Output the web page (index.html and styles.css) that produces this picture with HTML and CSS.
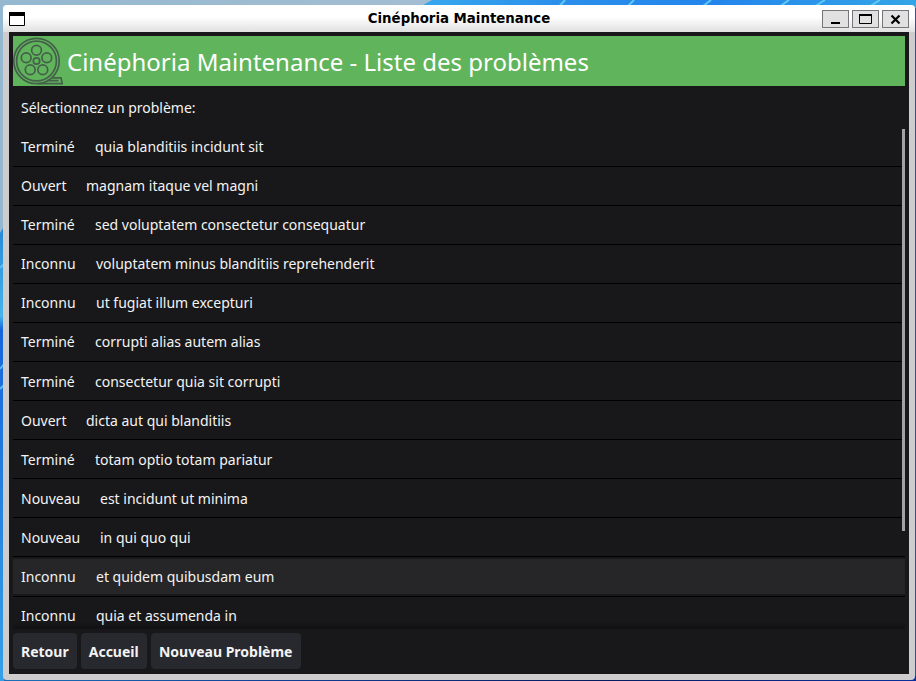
FILE: index.html
```
<!DOCTYPE html>
<html lang="fr">
<head>
<meta charset="utf-8">
<title>Cinéphoria Maintenance</title>
<link rel="stylesheet" href="styles.css">
</head>
<body>
<svg class="wallpaper" viewBox="0 0 916 681" aria-hidden="true">
  <defs>
    <linearGradient id="sky"><stop offset="0" stop-color="#94b8d0"/><stop offset="1" stop-color="#b4c4d4"/></linearGradient>
    <linearGradient id="petal"><stop offset="0" stop-color="#38a9ee"/><stop offset=".3" stop-color="#2b8eea"/><stop offset=".6" stop-color="#2385ec"/><stop offset="1" stop-color="#35a5e6"/></linearGradient>
    <linearGradient id="side" x2="0" y2="1"><stop offset="0" stop-color="#2788d8"/><stop offset=".2" stop-color="#45b4ea"/><stop offset=".23" stop-color="#1765dc"/><stop offset=".5" stop-color="#2279dc"/><stop offset="1" stop-color="#35a0e8"/></linearGradient>
    <linearGradient id="floor"><stop offset="0" stop-color="#1a70b8"/><stop offset=".3" stop-color="#103f96"/><stop offset=".65" stop-color="#061c60"/><stop offset="1" stop-color="#0a2f9c"/></linearGradient>
  </defs>
  <rect width="916" height="681" fill="url(#sky)"/>
  <path d="M414 10L432 0H916V10Z" fill="url(#petal)"/>
  <path d="M556 10L565 0M624 10L634 0M698 10L711 0M775 10L789 0M809 10L825 0M864 10L880 0" stroke="#62c8f4" stroke-width="2"/>
  <path d="M0 233L5 225V681H0Z" fill="url(#side)"/>
  <path d="M0 268L4 264M0 369L4 364M0 389L4 385" stroke="#62baf2" stroke-width="2"/>
  <path d="M912 8H916V681H912Z" fill="#1b56b8"/>
  <path d="M4 676H916V681H4Z" fill="url(#floor)"/>
</svg>
<div class="window">
  <header class="titlebar">
    <svg class="app-icon" width="16" height="14" viewBox="0 0 16 14"><path d="M.5.5h15v13H.5z" fill="#fff" stroke="#000"/><path d="M0 0h16v4H0z"/></svg>
    <h1 class="window-title">Cinéphoria Maintenance</h1>
    <div class="controls">
      <button class="control" aria-label="Réduire"><svg width="25" height="16" viewBox="0 0 25 16"><path d="M8 11h9v2H8z"/></svg></button>
      <button class="control" aria-label="Agrandir"><svg width="25" height="16" viewBox="0 0 25 16"><path d="M6.5 3.5h12v9h-12z" fill="none" stroke="#000"/><path d="M6 3h13v2H6z"/></svg></button>
      <button class="control" aria-label="Fermer"><svg width="25" height="16" viewBox="0 0 25 16"><path d="M8.5 4.5l8 8m0-8l-8 8" stroke="#000" stroke-width="2.2"/></svg></button>
    </div>
  </header>
  <main class="app">
    <div class="banner">
      <svg class="reel" width="50" height="50" viewBox="0 0 50 50" fill="none" stroke="#45604a" stroke-width="1.7">
        <circle cx="23.5" cy="25" r="22.7"/><circle cx="23.5" cy="25" r="19.9"/>
        <circle cx="23.5" cy="25" r="3.2"/>
        <circle cx="23.5" cy="14.2" r="4.9"/><circle cx="13.2" cy="21.7" r="4.9"/><circle cx="33.8" cy="21.7" r="4.9"/><circle cx="17.2" cy="33.8" r="4.9"/><circle cx="29.8" cy="33.8" r="4.9"/>
        <path d="M25 47.6H49.2L48 41.8H39.5M34 44.6H45.5"/>
      </svg>
      <h2 class="banner-title">Cinéphoria Maintenance - Liste des problèmes</h2>
    </div>
    <p class="prompt">Sélectionnez un problème:</p>
    <div class="list-view">
      <ul class="issues">
        <li class="issue"><span class="done">Terminé</span><span>quia blanditiis incidunt sit</span></li>
        <li class="issue"><span class="open">Ouvert</span><span>magnam itaque vel magni</span></li>
        <li class="issue"><span class="done">Terminé</span><span>sed voluptatem consectetur consequatur</span></li>
        <li class="issue"><span class="unknown">Inconnu</span><span>voluptatem minus blanditiis reprehenderit</span></li>
        <li class="issue"><span class="unknown">Inconnu</span><span>ut fugiat illum excepturi</span></li>
        <li class="issue"><span class="done">Terminé</span><span>corrupti alias autem alias</span></li>
        <li class="issue"><span class="done">Terminé</span><span>consectetur quia sit corrupti</span></li>
        <li class="issue"><span class="open">Ouvert</span><span>dicta aut qui blanditiis</span></li>
        <li class="issue"><span class="done">Terminé</span><span>totam optio totam pariatur</span></li>
        <li class="issue"><span class="new">Nouveau</span><span>est incidunt ut minima</span></li>
        <li class="issue"><span class="new">Nouveau</span><span>in qui quo qui</span></li>
        <li class="issue hovered"><span class="unknown">Inconnu</span><span>et quidem quibusdam eum</span></li>
        <li class="issue"><span class="unknown">Inconnu</span><span>quia et assumenda in</span></li>
      </ul>
      <div class="scroll-thumb"></div>
      <div class="scroll-shadow"></div>
    </div>
    <footer class="actions">
      <button class="action">Retour</button>
      <button class="action">Accueil</button>
      <button class="action create">Nouveau Problème</button>
    </footer>
  </main>
</div>
</body>
</html>
```
FILE: styles.css
```
* { box-sizing: border-box; }

body {
  margin: 0;
  height: 681px;
  padding: 5px 1px 1px 3px;
  overflow: hidden;
  position: relative;
}

.wallpaper {
  position: absolute;
  inset: 0;
  width: 916px;
  height: 681px;
}

.window {
  position: relative;
  height: 675px;
  display: flex;
  flex-direction: column;
  background: #cecccd;
  border-radius: 4px;
  overflow: hidden;
}

.titlebar {
  height: 27px;
  flex: none;
  display: grid;
  grid-template-columns: 1fr auto 1fr;
  align-items: center;
  padding: 0 6px;
  background: linear-gradient(#fff 0 45%, #e0e0e0);
}

.window-title {
  margin: 0;
  font: bold 13.33px/27px "DejaVu Sans", sans-serif;
  color: #000;
}

.controls {
  display: flex;
  justify-content: flex-end;
  gap: 3px;
  padding-top: 1px;
}

.control {
  width: 27px;
  height: 18px;
  padding: 0;
  border: 1px solid #77757a;
  background: #e1e1e1;
}

.control svg { display: block; }

.app {
  flex: 1;
  min-height: 0;
  margin: 0 6px 6px;
  padding: 4px 4px 5px;
  display: flex;
  flex-direction: column;
  gap: 4px;
  background: #18181a;
  color: #f3f3f3;
  font: 14px/19px "Noto Sans", sans-serif;
}

.banner {
  height: 50px;
  display: flex;
  align-items: center;
  gap: 4px;
  background: #60b45c;
}

.banner-title {
  margin: 0;
  padding-top: 2px;
  font-size: 24px;
  line-height: 32px;
  font-weight: 400;
  color: #fff;
  white-space: nowrap;
}

.prompt {
  margin: 0;
  height: 35px;
  padding: 8px;
}

.list-view {
  position: relative;
  height: 500px;
  overflow: hidden;
}

.issues {
  margin: 0;
  padding: 0;
  list-style: none;
}

.issue {
  position: relative;
  height: 35.1px;
  margin-bottom: 4px;
  padding: 8px;
  display: flex;
  gap: 20px;
}

.issue::after {
  content: "";
  position: absolute;
  left: 0;
  right: 0;
  bottom: -2.45px;
  height: 1px;
  background: #000;
}

.done { width: 54px; }
.open { width: 45px; }
.unknown { width: 55px; }
.new { width: 59px; }

.hovered { background: #262628; }

.scroll-thumb {
  position: absolute;
  top: 0;
  right: 0;
  width: 3px;
  height: 402px;
  background: #a3a3a4;
}

.scroll-shadow {
  position: absolute;
  left: 0;
  right: 0;
  bottom: 0;
  height: 8px;
  background: linear-gradient(transparent, rgba(0, 0, 0, .3));
}

.actions {
  display: flex;
  gap: 4px;
}

.action {
  height: 36px;
  padding: 0 8px;
  border: 0;
  border-radius: 4px;
  background: #28292e;
  color: #f3f3f3;
  font: bold 14px/19px "Noto Sans", sans-serif;
}

.create { width: 150px; }
```
